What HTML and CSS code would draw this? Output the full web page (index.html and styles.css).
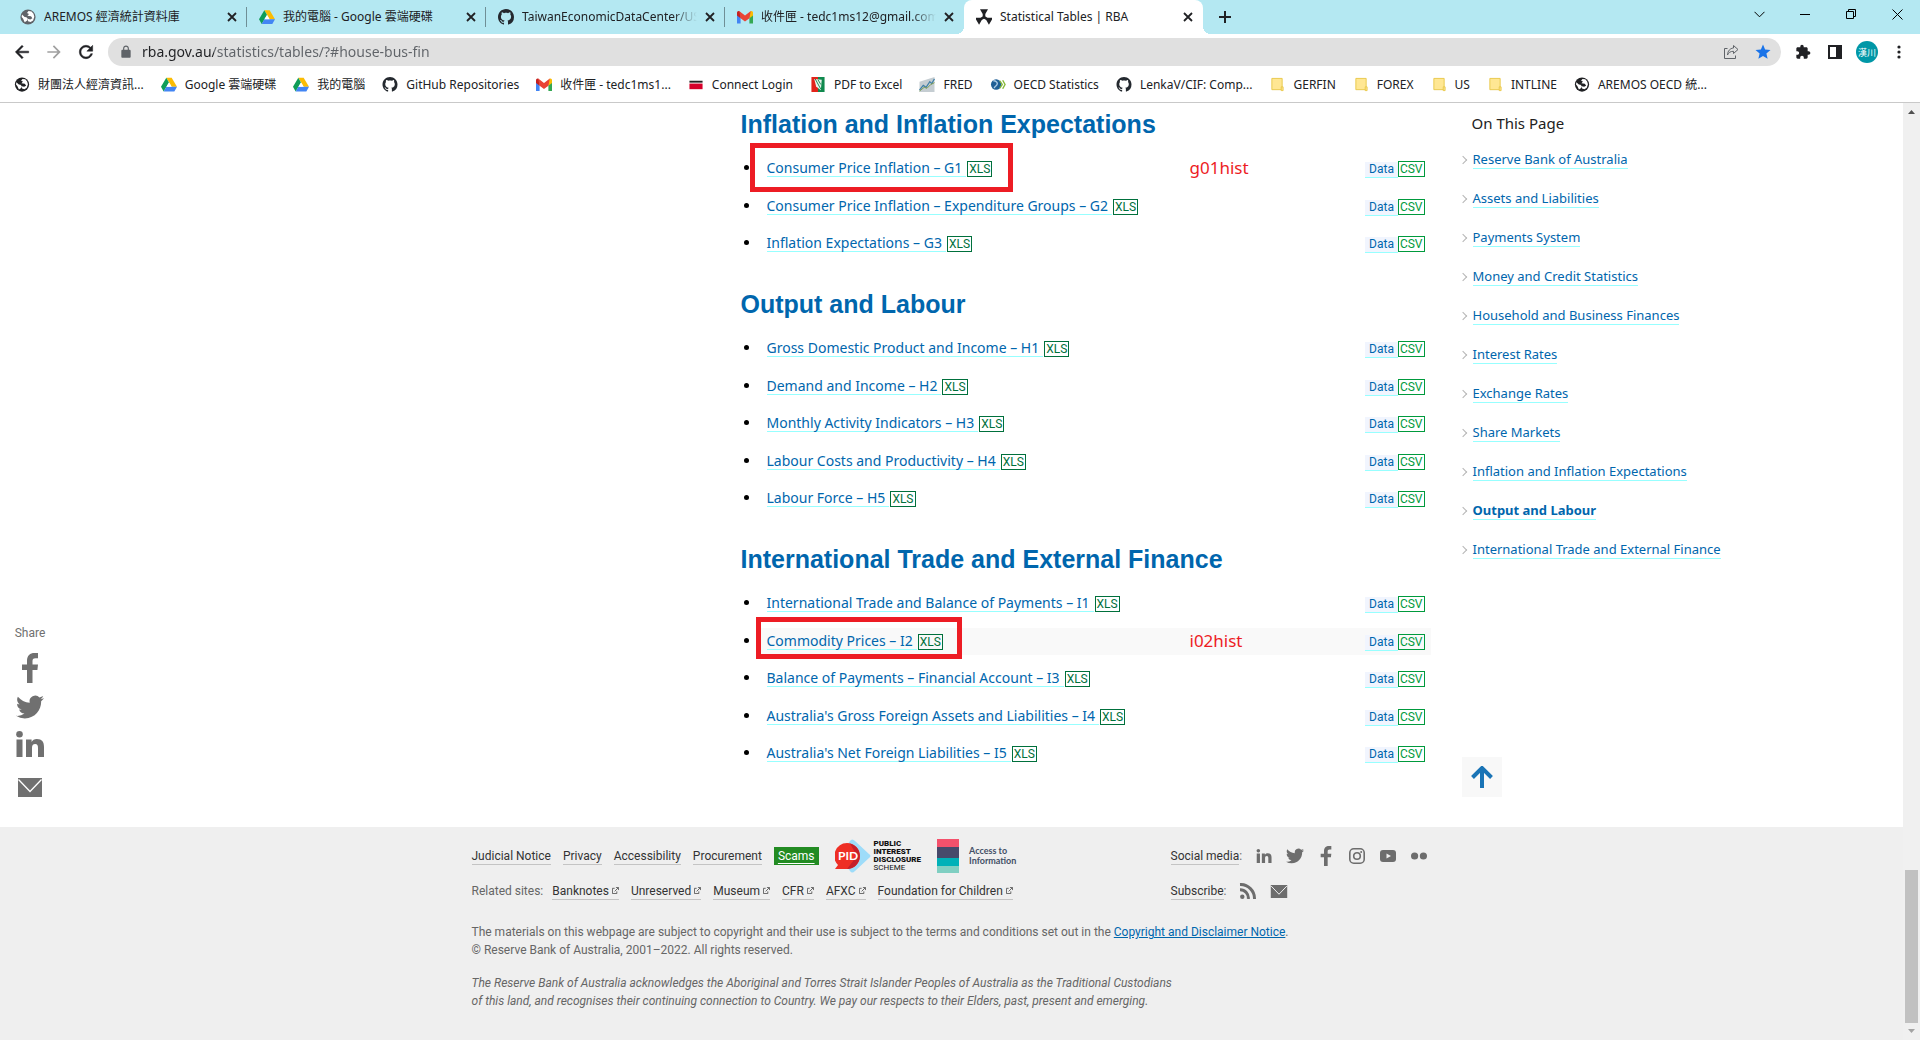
FILE: index.html
```html
<!DOCTYPE html>
<html lang="en-AU">
<head>
<meta charset="utf-8">
<meta name="viewport" content="width=device-width, initial-scale=1">
<title>Statistical Tables | RBA</title>
<link rel="stylesheet" href="styles.css">
</head>
<body>
<svg class="sprite" aria-hidden="true">
  <symbol id="globe" viewBox="0 0 16 16"><circle cx="8" cy="8" r="7.6" fill="currentColor"/><path d="M2 5.600 4.600 8l1.800.2 1.400 1.600-.6 1.800-2.500 1.700L3 9.600 1.600 8zM8.500 2 7 4l2 .9-1.600 1.800 3.600.5 1.400 2-2.200 1.200-2.400-.6.2 2.400 2.600.8 2.500-1.600 1.200-3.600-.8-3-2-2.300z" fill="#fff"/></symbol>
  <symbol id="drive" viewBox="0 0 24 22"><path d="M8 1h8l8 13.500h-8z" fill="#fbbc04"/><path d="M8 1 0 14.500 4 21.500l8-13.500z" fill="#0f9d58"/><path d="M8 14.500h16l-4 7H4z" fill="#4285f4"/><path d="m12 8 4 6.500H8z" fill="#fff"/></symbol>
  <symbol id="github" viewBox="0 0 16 16"><path fill="#24292f" d="M8 0C3.580 0 0 3.580 0 8c0 3.540 2.290 6.530 5.470 7.590.4.070.55-.17.55-.38 0-.19-.01-.82-.01-1.490-2.010.37-2.530-.49-2.690-.94-.09-.23-.48-.94-.82-1.130-.28-.15-.68-.52-.01-.53.63-.01 1.080.58 1.230.82.72 1.210 1.870.87 2.330.66.070-.52.28-.87.51-1.070-1.780-.2-3.640-.89-3.640-3.950 0-.87.31-1.590.82-2.150-.08-.2-.36-1.020.08-2.120 0 0 .67-.21 2.200.82.64-.18 1.320-.27 2-.27s1.360.09 2 .27c1.530-1.040 2.200-.82 2.200-.82.44 1.100.16 1.920.08 2.120.51.56.82 1.270.82 2.150 0 3.070-1.870 3.750-3.650 3.950.29.25.54.73.54 1.480 0 1.070-.01 1.930-.01 2.200 0 .21.15.46.55.38A8.013 8.013 0 0 0 16 8c0-4.420-3.580-8-8-8z"/></symbol>
  <symbol id="gmail" viewBox="0 0 16 13"><path d="M0 2v11h3.600V4.500z" fill="#4285f4"/><path d="M16 2v11h-3.600V4.500z" fill="#34a853"/><path d="M0 2.200V5l3.600 2.800V2.500L2.200.6C1 .1 0 1 0 2.200z" fill="#c5221f"/><path d="M16 2.200V5l-3.600 2.800V2.500L13.800.6C15 .1 16 1 16 2.200z" fill="#fbbc04"/><path d="M2.200.6 8 5 13.800.6l-1.400 7.200L8 11 3.600 7.800z" fill="#ea4335"/></symbol>
  <symbol id="rba" viewBox="0 0 16 16"><g fill="#202124"><path id="blade" d="M4 .3h8L9.300 5v3.500H6.700V5z"/><use href="#blade" transform="rotate(120 8 8.300)"/><use href="#blade" transform="rotate(240 8 8.300)"/></g></symbol>
  <symbol id="folder" viewBox="0 0 16 16"><path d="M2.500 1.500h11v12h-11z" fill="#ffe793" stroke="#e9c84a"/><path d="M12.500 10.500h2v4h-2z" fill="#ffe793" stroke="#e9c84a"/></symbol>
  <symbol id="close" viewBox="0 0 10 10"><path d="m1 1 8 8M9 1 1 9" stroke="#202124" stroke-width="1.800" fill="none"/></symbol>
  <symbol id="twitter" viewBox="0 2 24 20"><path fill="currentColor" d="M23.953 4.570a10 10 0 0 1-2.825.775 4.958 4.958 0 0 0 2.163-2.723c-.951.555-2.005.959-3.127 1.184a4.920 4.920 0 0 0-8.384 4.482C7.690 8.095 4.067 6.130 1.640 3.162a4.822 4.822 0 0 0-.666 2.475c0 1.710.87 3.213 2.188 4.096a4.904 4.904 0 0 1-2.228-.616v.06a4.923 4.923 0 0 0 3.946 4.827 4.996 4.996 0 0 1-2.212.085 4.936 4.936 0 0 0 4.604 3.417 9.867 9.867 0 0 1-6.102 2.105c-.39 0-.779-.023-1.170-.067a13.995 13.995 0 0 0 7.557 2.209c9.053 0 13.998-7.496 13.998-13.985 0-.21 0-.42-.015-.63A9.935 9.935 0 0 0 24 4.590z"/></symbol>
  <symbol id="facebook" viewBox="0 0 16 30"><path fill="currentColor" d="M5 30V17H0v-5.500h5V8c0-5.500 3-8 7.500-8H16v5.300h-2.500c-2.500 0-3 1-3 3v3.200H16l-.6 5.500h-4.900v13z"/></symbol>
  <symbol id="linkedin" viewBox="0 0 28 26"><path fill="currentColor" d="M.5 8.500h6V26h-6zM10 8.500h5.600v2.400c1-1.800 2.700-2.900 5.200-2.900C26 8 28 10.800 28 16v10h-6v-9c0-2.500-.7-4-2.800-4-2.300 0-3.200 1.600-3.200 4v9h-6z"/><circle cx="3.500" cy="3.300" r="3.300" fill="currentColor"/></symbol>
  <symbol id="mail" viewBox="0 0 24 19"><path fill="currentColor" d="M0 0h24v19H0z"/><path d="m.5 1.500 11.500 12 11.500-12" fill="none" stroke="#fff" stroke-width="1.300"/></symbol>
  <symbol id="ext" viewBox="0 0 8 8"><path d="M3 1.500H.5v6h5V5M3 5l4-4M4.500.5h3v3" fill="none" stroke="#555"/></symbol>
</svg>

<header class="browser">
  <div class="tabstrip">
    <div class="tab"><svg class="favicon muted"><use href="#globe"/></svg><span class="tab-title">AREMOS 經濟統計資料庫</span><button class="tab-close" aria-label="Close tab"><svg><use href="#close"/></svg></button></div>
    <div class="tab"><svg class="favicon"><use href="#drive"/></svg><span class="tab-title">我的電腦 - Google 雲端硬碟</span><button class="tab-close" aria-label="Close tab"><svg><use href="#close"/></svg></button></div>
    <div class="tab"><svg class="favicon"><use href="#github"/></svg><span class="tab-title faded">TaiwanEconomicDataCenter/US</span><button class="tab-close" aria-label="Close tab"><svg><use href="#close"/></svg></button></div>
    <div class="tab no-rule"><svg class="favicon"><use href="#gmail"/></svg><span class="tab-title faded">收件匣 - tedc1ms12@gmail.com</span><button class="tab-close" aria-label="Close tab"><svg><use href="#close"/></svg></button></div>
    <div class="tab active"><svg class="favicon"><use href="#rba"/></svg><span class="tab-title">Statistical Tables | RBA</span><button class="tab-close" aria-label="Close tab"><svg><use href="#close"/></svg></button></div>
    <button class="new-tab" aria-label="New tab"><svg width="12" height="12" viewBox="0 0 12 12"><path d="M6 0v12M0 6h12" stroke="#202124" stroke-width="2"/></svg></button>
    <div class="window-controls">
      <button aria-label="Search tabs"><svg width="11" height="7" viewBox="0 0 11 7"><path d="m.5.8 5 5 5-5" fill="none" stroke="#000"/></svg></button>
      <button aria-label="Minimise"><svg width="10" height="10" viewBox="0 0 10 10"><path d="M0 5.500h10" stroke="#000"/></svg></button>
      <button aria-label="Restore"><svg width="10" height="10" viewBox="0 0 10 10"><path d="M.5 2.500h7v7h-7zM2.500 2.500v-2h7v7h-2" fill="none" stroke="#000"/></svg></button>
      <button aria-label="Close window"><svg width="11" height="11" viewBox="0 0 11 11"><path d="m.5.5 10 10M10.500.5l-10 10" stroke="#000"/></svg></button>
    </div>
  </div>
  <div class="toolbar">
    <button class="tool" aria-label="Back"><svg width="20" height="20" viewBox="0 0 24 24"><path stroke="currentColor" stroke-width=".6" fill="currentColor" d="M20 11H7.830l5.590-5.590L12 4l-8 8 8 8 1.410-1.410L7.830 13H20z"/></svg></button>
    <button class="tool disabled" aria-label="Forward"><svg width="20" height="20" viewBox="0 0 24 24"><path fill="currentColor" d="m12 4-1.410 1.410L16.170 11H4v2h12.170l-5.580 5.590L12 20l8-8z"/></svg></button>
    <button class="tool" aria-label="Reload"><svg width="20" height="20" viewBox="0 0 24 24"><path stroke="currentColor" stroke-width=".6" fill="currentColor" d="M17.650 6.350C16.200 4.900 14.210 4 12 4c-4.420 0-7.990 3.580-7.990 8s3.570 8 7.990 8c3.730 0 6.840-2.550 7.730-6h-2.080c-.82 2.330-3.040 4-5.650 4-3.310 0-6-2.690-6-6s2.690-6 6-6c1.660 0 3.140.69 4.220 1.780L13 11h7V4z"/></svg></button>
    <div class="omnibox">
      <svg width="16" height="14" viewBox="0 0 24 24"><path fill="#5f6368" d="M18 8h-1V6c0-2.760-2.240-5-5-5S7 3.240 7 6v2H6c-1.100 0-2 .9-2 2v10c0 1.100.9 2 2 2h12c1.100 0 2-.9 2-2V10c0-1.100-.9-2-2-2zM9 8V6c0-1.660 1.340-3 3-3s3 1.340 3 3v2z"/></svg>
      <input class="url" type="text" aria-label="Address" value="rba.gov.au/statistics/tables/?#house-bus-fin">
      <button class="tool" aria-label="Share page"><svg width="16" height="16" viewBox="0 0 16 16"><path d="M4.500 4.500h-3v10h11v-3M10.500 1.500l4.500 4-4.500 4V7.300C7.500 7.300 5.500 8.500 4.500 11c.2-4 2.500-6.700 6-7z" fill="none" stroke="#5f6368"/></svg></button>
      <button class="tool star" aria-label="Bookmarked"><svg width="18" height="18" viewBox="0 0 24 24"><path fill="currentColor" d="M12 17.270 18.180 21l-1.640-7.030L22 9.240l-7.190-.61L12 2 9.190 8.630 2 9.240l5.460 4.730L5.820 21z"/></svg></button>
    </div>
    <button class="tool" aria-label="Extensions"><svg width="16" height="16" viewBox="0 0 24 24"><path fill="currentColor" d="M20.500 11H19V7c0-1.100-.9-2-2-2h-4V3.500C13 2.120 11.880 1 10.500 1S8 2.120 8 3.500V5H4c-1.100 0-1.990.9-1.990 2v3.800H3.500c1.490 0 2.700 1.210 2.700 2.700s-1.210 2.700-2.700 2.700H2V20c0 1.100.9 2 2 2h3.800v-1.500c0-1.490 1.210-2.700 2.700-2.700s2.700 1.210 2.700 2.700V22H17c1.100 0 2-.9 2-2v-4h1.500c1.380 0 2.500-1.120 2.500-2.500S21.880 11 20.500 11z"/></svg></button>
    <button class="tool" aria-label="Side panel"><svg width="14" height="14" viewBox="0 0 14 14"><path fill="currentColor" d="M0 0h14v14H0zm2 2v10h6V2z" fill-rule="evenodd"/></svg></button>
    <button class="tool" aria-label="Profile"><span class="avatar">漢川</span></button>
    <button class="tool" aria-label="Menu"><svg width="4" height="14" viewBox="0 0 4 14"><g fill="currentColor"><circle cx="2" cy="2" r="1.600"/><circle cx="2" cy="7" r="1.600"/><circle cx="2" cy="12" r="1.600"/></g></svg></button>
  </div>
  <nav class="bookmarks" aria-label="Bookmarks">
    <a href="#"><svg><use href="#globe"/></svg>財團法人經濟資訊...</a>
    <a href="#"><svg><use href="#drive"/></svg>Google 雲端硬碟</a>
    <a href="#"><svg><use href="#drive"/></svg>我的電腦</a>
    <a href="#"><svg><use href="#github"/></svg>GitHub Repositories</a>
    <a href="#"><svg><use href="#gmail"/></svg>收件匣 - tedc1ms1...</a>
    <a href="#"><svg viewBox="0 0 16 16"><path d="M1 4h14v2H1z" fill="#222"/><path d="M1 7h14v6H1z" fill="#d6002a"/></svg>Connect Login</a>
    <a href="#"><svg viewBox="0 0 16 16"><path d="M1 0h7v16H1z" fill="#e2231a"/><path d="M8 0h7v16H8z" fill="#10894e"/><path d="m4 2 8 1-1 11-5-4z" fill="#e9f3ec"/><path d="m5 2 6 11M8 3l3 5" stroke="#10894e"/></svg>PDF to Excel</a>
    <a href="#"><svg viewBox="0 0 16 16"><path d="M0 5 16 0v16H0z" fill="#c5cdd2"/><path d="m0 14 4-5 3 2 4-6 2 2 3-5" fill="none" stroke="#3f7fa6" stroke-width="1.300"/><path d="m0 15 5-4 3 1 4-4 4-2" fill="none" stroke="#7b9b4c"/></svg>FRED</a>
    <a href="#"><svg viewBox="0 0 16 16"><circle cx="6" cy="8" r="5.500" fill="#1f5f96"/><path d="M3 4c3 0 5 2 4 4s-3 2-3 4" stroke="#a9c9e4" stroke-width="1.500" fill="none"/><path d="m10 4 2.500 4-2.500 4M13 3.500 15.500 8 13 12.500" fill="none" stroke="#86b838" stroke-width="1.500"/></svg>OECD Statistics</a>
    <a href="#"><svg><use href="#github"/></svg>LenkaV/CIF: Comp...</a>
    <a href="#"><svg><use href="#folder"/></svg>GERFIN</a>
    <a href="#"><svg><use href="#folder"/></svg>FOREX</a>
    <a href="#"><svg><use href="#folder"/></svg>US</a>
    <a href="#"><svg><use href="#folder"/></svg>INTLINE</a>
    <a href="#"><svg><use href="#globe"/></svg>AREMOS OECD 統...</a>
  </nav>
</header>

<div class="viewport">
  <div class="page">
    <div class="content">
      <nav class="share" aria-label="Share this page">
        <span>Share</span>
        <a href="#" aria-label="Facebook"><svg width="16" height="30"><use href="#facebook"/></svg></a>
        <a href="#" aria-label="Twitter"><svg width="28" height="24"><use href="#twitter"/></svg></a>
        <a href="#" aria-label="LinkedIn"><svg width="28" height="26"><use href="#linkedin"/></svg></a>
        <a class="share-mail" href="#" aria-label="Email"><svg width="24" height="19"><use href="#mail"/></svg></a>
      </nav>

      <main class="tables">
        <section>
          <h2>Inflation and Inflation Expectations</h2>
          <ul>
            <li><div class="row"><a class="title" href="#">Consumer Price Inflation – G1</a><span class="xls">XLS</span><a class="data" href="#">Data</a><span class="csv">CSV</span></div><span class="mark mark-g1"></span><span class="note">g01hist</span></li>
            <li><div class="row"><a class="title" href="#">Consumer Price Inflation – Expenditure Groups – G2</a><span class="xls">XLS</span><a class="data" href="#">Data</a><span class="csv">CSV</span></div></li>
            <li><div class="row"><a class="title" href="#">Inflation Expectations – G3</a><span class="xls">XLS</span><a class="data" href="#">Data</a><span class="csv">CSV</span></div></li>
          </ul>
        </section>
        <section>
          <h2>Output and Labour</h2>
          <ul>
            <li><div class="row"><a class="title" href="#">Gross Domestic Product and Income – H1</a><span class="xls">XLS</span><a class="data" href="#">Data</a><span class="csv">CSV</span></div></li>
            <li><div class="row"><a class="title" href="#">Demand and Income – H2</a><span class="xls">XLS</span><a class="data" href="#">Data</a><span class="csv">CSV</span></div></li>
            <li><div class="row"><a class="title" href="#">Monthly Activity Indicators – H3</a><span class="xls">XLS</span><a class="data" href="#">Data</a><span class="csv">CSV</span></div></li>
            <li><div class="row"><a class="title" href="#">Labour Costs and Productivity – H4</a><span class="xls">XLS</span><a class="data" href="#">Data</a><span class="csv">CSV</span></div></li>
            <li><div class="row"><a class="title" href="#">Labour Force – H5</a><span class="xls">XLS</span><a class="data" href="#">Data</a><span class="csv">CSV</span></div></li>
          </ul>
        </section>
        <section>
          <h2>International Trade and External Finance</h2>
          <ul>
            <li><div class="row"><a class="title" href="#">International Trade and Balance of Payments – I1</a><span class="xls">XLS</span><a class="data" href="#">Data</a><span class="csv">CSV</span></div></li>
            <li class="hovered"><div class="row"><a class="title" href="#">Commodity Prices – I2</a><span class="xls">XLS</span><a class="data" href="#">Data</a><span class="csv">CSV</span></div><span class="mark mark-i2"></span><span class="note">i02hist</span></li>
            <li><div class="row"><a class="title" href="#">Balance of Payments – Financial Account – I3</a><span class="xls">XLS</span><a class="data" href="#">Data</a><span class="csv">CSV</span></div></li>
            <li><div class="row"><a class="title" href="#">Australia's Gross Foreign Assets and Liabilities – I4</a><span class="xls">XLS</span><a class="data" href="#">Data</a><span class="csv">CSV</span></div></li>
            <li><div class="row"><a class="title" href="#">Australia's Net Foreign Liabilities – I5</a><span class="xls">XLS</span><a class="data" href="#">Data</a><span class="csv">CSV</span></div></li>
          </ul>
        </section>
      </main>

      <aside class="toc">
        <h3>On This Page</h3>
        <ul>
          <li><a href="#">Reserve Bank of Australia</a></li>
          <li><a href="#">Assets and Liabilities</a></li>
          <li><a href="#">Payments System</a></li>
          <li><a href="#">Money and Credit Statistics</a></li>
          <li><a href="#">Household and Business Finances</a></li>
          <li><a href="#">Interest Rates</a></li>
          <li><a href="#">Exchange Rates</a></li>
          <li><a href="#">Share Markets</a></li>
          <li><a href="#">Inflation and Inflation Expectations</a></li>
          <li class="current"><a href="#">Output and Labour</a></li>
          <li><a href="#">International Trade and External Finance</a></li>
        </ul>
        <a class="to-top" href="#" aria-label="Back to top"><svg width="22" height="22" viewBox="0 0 22 22"><path d="M11 22V3M1.500 11.500 11 2l9.500 9.500" fill="none" stroke="#1a74b6" stroke-width="4"/></svg></a>
      </aside>
    </div>

    <footer class="footer">
      <div class="footer-inner">
        <div class="footer-grid">
          <div class="legal">
            <a href="#">Judicial Notice</a><a href="#">Privacy</a><a href="#">Accessibility</a><a href="#">Procurement</a>
            <span class="scams"><a href="#">Scams</a></span>
            <div class="pid">
              <svg width="36" height="34" viewBox="0 0 36 34"><path d="M15 2q2-3 5 0l14 13q3 2 0 4L20 32q-3 3-5 0L4 17z" fill="#9edcf9"/><path d="M12 4a13 13 0 1 1 0 26H0l3-4A13 13 0 0 1 12 4z" fill="#ee2e24"/><path d="M15 4.400a13 13 0 0 1 2 24.500q-3 1-5 1L22 17z" fill="#c4202b"/><text x="3" y="21" class="pid-word">PID</text></svg>
              <p>PUBLIC<br>INTEREST<br>DISCLOSURE<br><span>SCHEME</span></p>
            </div>
            <div class="ati">
              <svg width="22" height="34" viewBox="0 0 22 34"><path d="M0 0h22v8H0z" fill="#f4516c"/><path d="M0 8h22v11H0z" fill="#474a6b"/><path d="M0 19h22v8H0z" fill="#00b1b8"/><path d="M0 27h22v7H0z" fill="#80cfc2"/></svg>
              <p>Access to<br>Information</p>
            </div>
          </div>
          <div class="social"><span><a href="#">Social media</a>:</span>
            <svg width="18" height="14"><use href="#linkedin"/></svg>
            <svg width="18" height="16"><use href="#twitter"/></svg>
            <svg width="18" height="20"><use href="#facebook"/></svg>
            <svg width="18" height="16" viewBox="0 0 18 16"><rect x="1.800" y=".8" width="14.400" height="14.400" rx="4" fill="none" stroke="currentColor" stroke-width="1.600"/><circle cx="9" cy="8" r="3.300" fill="none" stroke="currentColor" stroke-width="1.600"/><circle cx="13.200" cy="3.900" r="1" fill="currentColor"/></svg>
            <svg width="18" height="12" viewBox="0 0 18 12"><rect x="1" width="16" height="12" rx="3" fill="currentColor"/><path d="m7.500 3.500 4.500 2.500-4.500 2.500z" fill="#efefef"/></svg>
            <svg width="18" height="8" viewBox="0 0 18 8"><circle cx="4.600" cy="4" r="3.600" fill="currentColor"/><circle cx="13.400" cy="4" r="3.600" fill="currentColor"/></svg>
          </div>
          <div class="related">
            <span>Related sites:</span>
            <a href="#">Banknotes <svg><use href="#ext"/></svg></a><a href="#">Unreserved <svg><use href="#ext"/></svg></a><a href="#">Museum <svg><use href="#ext"/></svg></a><a href="#">CFR <svg><use href="#ext"/></svg></a><a href="#">AFXC <svg><use href="#ext"/></svg></a><a href="#">Foundation for Children <svg><use href="#ext"/></svg></a>
          </div>
          <div class="social"><span><a href="#">Subscribe</a>:</span>
            <svg width="18" height="16" viewBox="0 0 18 16"><circle cx="3.300" cy="13.700" r="2.200" fill="currentColor"/><path d="M1 6.700a8.300 8.300 0 0 1 8.300 9.300M1 1.500A14 14 0 0 1 15.500 16" fill="none" stroke="currentColor" stroke-width="3"/></svg>
            <svg width="18" height="13"><use href="#mail"/></svg>
          </div>
        </div>
        <p class="copyright">The materials on this webpage are subject to copyright and their use is subject to the terms and conditions set out in the <a href="#">Copyright and Disclaimer Notice</a>.<br>© Reserve Bank of Australia, 2001–2022. All rights reserved.</p>
        <p class="country">The Reserve Bank of Australia acknowledges the Aboriginal and Torres Strait Islander Peoples of Australia as the Traditional Custodians<br>of this land, and recognises their continuing connection to Country. We pay our respects to their Elders, past, present and emerging.</p>
      </div>
    </footer>
  </div>
  <div class="scrollbar" aria-hidden="true">
    <svg width="7" height="4" viewBox="0 0 7 4"><path d="M3.500 0 7 4H0z" fill="#505050"/></svg>
    <div class="track"><div class="thumb"></div></div>
    <svg width="7" height="4" viewBox="0 0 7 4"><path d="M0 0h7L3.500 4z" fill="#a3a3a3"/></svg>
  </div>
</div>
</body>
</html>
```
FILE: styles.css
```css
* { box-sizing: border-box; }
body {
  margin: 0;
  min-height: 100vh;
  display: flex;
  flex-direction: column;
  background: #fff;
  font-family: "Noto Sans", "Noto Sans CJK TC", sans-serif;
  font-size: 14px;
  color: #000;
}
ul { list-style: none; margin: 0; padding: 0; }
h2, h3, p { margin: 0; }
a { text-decoration: none; }
svg { display: block; flex: none; }
button { border: 0; padding: 0; background: none; font: inherit; color: inherit; display: flex; align-items: center; justify-content: center; }
.sprite { position: absolute; width: 0; height: 0; }

/* Browser window */
.browser { font-size: 12px; color: #202124; border-bottom: 1px solid #c9c9c9; }
.tabstrip { display: flex; height: 34px; padding-left: 8px; background: #b4e8f2; }
.tab { position: relative; display: flex; align-items: center; gap: 8px; width: 239px; padding: 0 10px 0 12px; }
.tab::after { content: ""; position: absolute; right: 0; top: 7px; width: 1px; height: 20px; background: #6f8f96; }
.tab.no-rule::after { display: none; }
.tab.active { background: #fff; border-radius: 8px 8px 0 0; }
.tab.active::before, .tab.active::after { content: ""; position: absolute; top: auto; bottom: 0; width: 8px; height: 8px; }
.tab.active::before { left: -8px; background: radial-gradient(circle at 0 0, #b4e8f2 8px, #fff 8px); }
.tab.active::after { right: -8px; background: radial-gradient(circle at 100% 0, #b4e8f2 8px, #fff 8px); }
.favicon { width: 16px; height: 16px; }
.favicon.muted { color: #5f6368; }
.tab-title { flex: 1; min-width: 0; overflow: hidden; white-space: nowrap; line-height: 18px; }
.tab-title.faded { mask-image: linear-gradient(90deg, #000 calc(100% - 24px), transparent); }
.tab-close svg { width: 10px; height: 10px; }
.new-tab { width: 44px; }
.window-controls { display: flex; margin-left: auto; }
.window-controls button { width: 46px; padding-bottom: 6px; }
.toolbar { display: flex; align-items: center; height: 36px; padding: 0 5px 0 6px; }
.tool { width: 32px; height: 28px; }
.tool.disabled { color: #a0a0a0; }
.tool.star { color: #1a73e8; }
.omnibox { flex: 1; display: flex; align-items: center; height: 28px; margin: 0 6px; padding: 0 2px 0 10px; border-radius: 14px; background: #e0e0e0; }
.url {
  flex: 1;
  min-width: 0;
  height: 26px;
  margin: 0 0 2px 8px;
  padding: 0;
  border: 0;
  font: inherit;
  font-size: 14px;
  color: transparent;
  background: linear-gradient(90deg, #202124 72px, #5f6368 72px);
  background-clip: text;
}
.avatar { display: flex; align-items: center; justify-content: center; width: 22px; height: 22px; border-radius: 50%; background: #0097a7; color: #fff; font-size: 9px; }
.bookmarks { display: flex; align-items: center; gap: 17px; height: 32px; padding: 0 0 4px 14px; white-space: nowrap; overflow: hidden; }
.bookmarks a { display: flex; align-items: center; gap: 8px; color: #202124; }
.bookmarks svg { width: 16px; height: 15px; }

/* Page */
.viewport { flex: 1; display: flex; }
.page { flex: 1; min-width: 0; display: flex; flex-direction: column; }
.content { display: grid; grid-template-columns: 1fr minmax(0, 960px) 1fr; }
.share { align-self: end; display: flex; flex-direction: column; align-items: center; gap: 12px; width: 32px; margin: 0 0 30px 14px; color: #707070; font: 12px/16px Roboto, sans-serif; }
.share a { color: inherit; }
.share-mail { margin-top: 9px; }

.tables { padding: 5px 1px 60px 269px; }
.tables section + section { margin-top: 31px; }
.tables h2 { margin-bottom: 15px; font: bold 25px/32px "Liberation Sans", Arial, sans-serif; color: #0066ad; }
.tables ul { padding-left: 20px; list-style: disc; }
.tables li { position: relative; min-height: 27px; margin-bottom: 11px; line-height: 25px; }
.tables li:nth-child(even) { margin-bottom: 10px; }
.tables li:last-child { margin-bottom: 0; }
.tables li.hovered { background: #f9f9f9; }
.row { display: flex; align-items: baseline; padding: 0 6px; }
.title, .data { color: #0066ad; border-bottom: 1px solid #97ffff; line-height: 17px; }
.title { padding-right: 4px; }
.xls, .csv { border: 1px solid; padding: 0 1px; font: 12px/14px Roboto, sans-serif; }
.xls { margin-left: 1px; color: #00703c; }
.csv { color: #009a3d; }
.data { margin-left: auto; padding: 0 4px; background: #f1f5fe; font: 12px/15px Roboto, sans-serif; }
.mark { position: absolute; border: 5px solid #ed1c24; }
.mark-g1 { left: -11px; top: -12px; width: 263px; height: 49px; }
.mark-i2 { left: -5px; top: -11px; width: 206px; height: 42px; }
.note { position: absolute; left: 429px; top: 0; font-size: 17px; color: #ed1c24; }

.toc { display: flex; flex-direction: column; align-items: flex-start; padding: 8px 0 30px 30px; }
.toc h3 { margin: 0 0 5px 10px; font-size: 15px; font-weight: 400; line-height: 24px; color: #222; }
.toc li { display: flex; align-items: center; gap: 5px; height: 39px; font-size: 13px; }
.toc li::before { content: ""; width: 5px; height: 5px; margin-left: -2px; border: solid #b5b5b5; border-width: 1px 1px 0 0; transform: rotate(45deg); }
.toc li a { margin-left: 2px; line-height: 18px; color: #0066ad; border-bottom: 1px solid #97ffff; }
.toc li.current { font-weight: 700; }
.to-top { display: flex; align-items: center; justify-content: center; width: 40px; height: 40px; margin-top: auto; background: #f8f8f8; }

/* Footer */
.footer { flex: 1; display: grid; grid-template-columns: 1fr minmax(0, 960px) 1fr; padding: 12px 0 28px; background: #efefef; color: #666; font: 12px/18px Roboto, sans-serif; }
.footer-inner { grid-column: 2; }
.footer-grid { display: grid; grid-template-columns: 699px 1fr; row-gap: 9px; margin-bottom: 23px; }
.footer-grid a { color: #333; border-bottom: 1px solid #c4c4c4; }
.legal, .related, .social { display: flex; align-items: center; }
.legal { gap: 12px; height: 34px; }
.footer-grid .legal > a, .related a { line-height: 16px; }
.scams { padding: 0 4px; background: #228b22; line-height: 18px; }
.footer-grid .scams a { color: #fff; border-bottom: 0; text-decoration: underline; text-underline-offset: 3px; }
.pid, .ati { display: flex; align-items: center; gap: 3px; }
.pid { margin-left: 4px; }
.pid-word { font: bold 12px Lato, sans-serif; fill: #fff; }
.pid p { font: 900 8px/8px Roboto, sans-serif; color: #111; }
.pid span { font-weight: 400; }
.ati { gap: 10px; margin-left: 4px; }
.ati p { font: bold 9px/10px Lato, sans-serif; color: #435066; }
.related { gap: 12px; }
.related span { margin-right: -3px; }
.related a { display: flex; align-items: center; gap: 3px; }
.related svg { width: 7px; height: 7px; }
.social { gap: 13px; color: #6d6d6d; height: 34px; }
.related + .social { height: 18px; }
.social span a { padding-bottom: 1px; }
.copyright { margin-bottom: 15px; }
.copyright a { color: #0066ad; text-decoration: underline; }
.country { font-style: italic; }

/* Scrollbar */
.scrollbar { display: flex; flex-direction: column; align-items: center; width: 17px; padding: 7px 0; background: #f0f0f0; }
.track { flex: 1; display: flex; flex-direction: column; justify-content: flex-end; padding: 6px 0; }
.thumb { width: 13px; height: 17%; background: #c1c1c1; }
```
